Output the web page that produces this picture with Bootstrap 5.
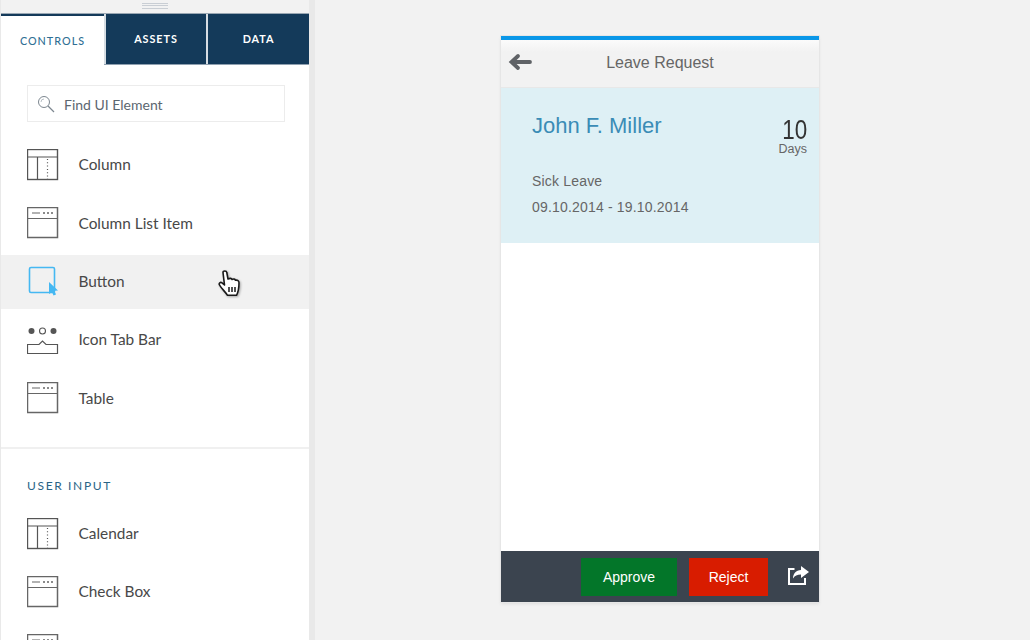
<!DOCTYPE html>
<html lang="en"><head><meta charset="utf-8"><title>Leave Request</title>
<link href="https://cdn.jsdelivr.net/npm/bootstrap@5.3.0/dist/css/bootstrap.min.css" rel="stylesheet">
<style>
html,body{height:640px;overflow:hidden}
body{background:#f2f2f2;font-family:"Lato",sans-serif;color:#4a4a4a}
.stage{height:640px}
.side{width:315px;height:640px;flex:none;border-right:6px solid #e9e9e9;border-left:1px solid #e9e9e9;overflow:hidden}
.handle{height:13px;background:#f2f2f2}
.grip{width:26px;height:6px;border-top:1px solid #c9ced4;border-bottom:1px solid #c9ced4;position:relative;top:3px}
.grip::before{content:"";display:block;height:1px;margin-top:1px;background:#c9ced4}
.tabrow{height:52px;font-size:10.800px;font-weight:700;letter-spacing:.95px;background:#143a5a;border-top:1px solid #9aa7b3;border-bottom:1px solid #8fa0b0}
.tabcell{color:#fff;border-left:2px solid #d6dde3;width:102px;height:50px;padding-top:1px}
.tabcell.on{width:103px;background:#fff;color:#2f6f94;border-left:0;font-weight:500;font-size:10.800px;letter-spacing:1px;margin-bottom:-1px;height:51px;border-top:2px solid #143a5a}
.tabcell.wide{width:103px}
.finder{margin:20px 24px 0 26px;height:37px;border:1px solid #ececec;padding:1px 0 0 9px;font-size:14px;color:#5c6670;gap:9px}
.ctl{height:54px;margin-bottom:4.300px;padding-left:26px;font-size:15.400px;color:#484848;gap:19.500px}
.ctl svg.ic{flex:none;width:32px;height:32px}
.ctl.hov{background:#f1f1f1}
.list1{padding-top:16px}
.rule{height:2px;background:#f0f0f0;margin-top:21.500px}
.grp{font-size:12px;letter-spacing:1.650px;color:#2a6486;padding:29px 0 0 26px;line-height:16px;height:58px}
.hand{position:absolute;left:218px;top:270px;filter:drop-shadow(1px 1px 1px rgba(0,0,0,.3))}
.phonewrap{padding:36px 0 0 186px}
.phone{width:318px;height:566px;background:#fff;box-shadow:0 0 0 1px #e6e6e6,0 2px 3px #dcdcdc;font-family:"Liberation Sans",sans-serif;border-top:4px solid #0a97e8}
.phead{height:48px;background:linear-gradient(#fbfbfb,#f2f2f2 12px);border-bottom:1px solid #e8e8e8;color:#666;font-size:16px;padding-bottom:2px;position:relative}
.pback{position:absolute;left:7px;top:13px}
.pinfo{height:155px;background:#def0f5;padding:0 12px 0 31px;position:relative}
.who{font-size:22px;color:#3a8cb6;line-height:26px;padding-top:25px}
.dayn{position:absolute;right:12px;top:31px;text-align:right;font-size:28px;line-height:22px;color:#333;transform:scaleX(.8);transform-origin:right}
.dayl{position:absolute;right:12px;top:54px;font-size:12.500px;line-height:14px;color:#666}
.pline{font-size:14px;color:#666;line-height:20px;letter-spacing:.18px}
.pbody{height:308px}
.pfoot{height:51px;background:#3b444f;padding:0 9px 0 80px}
.act{height:38px;border:0;border-radius:0;color:#fff;font-size:14px;padding:2px 0 0;font-family:"Liberation Sans",sans-serif}
.act.ok{width:96px;background:#037629;margin-right:12px}
.act.no{width:79px;background:#d81c00;margin-right:20px}
.sharei{margin-bottom:4px}
.first{padding-top:32px}
.second{margin-top:6px}
</style></head>
<body>
<svg width="0" height="0" class="d-block position-absolute"><defs>
<g id="i-col" fill="none" stroke="#555" stroke-width="1.200"><rect x=".5" y=".5" width="30" height="30" stroke-width="1.400"/><path d="M.5 8h30M10.500 8v22.500"/><path d="M20.500 10v20" stroke-dasharray="1 2.300"/></g>
<g id="i-li" fill="none" stroke="#666" stroke-width="1.100"><rect x=".5" y=".5" width="30" height="30" stroke-width="1.500"/><path d="M.5 11.500h30M5 6h8"/><path d="M16 6h11" stroke-dasharray="2 2" stroke-width="1.700"/></g>
</defs></svg>
<div class="stage d-flex">
<aside class="side bg-white">
 <div class="handle d-flex justify-content-center"><div class="grip"></div></div>
 <div class="tabrow d-flex text-uppercase">
  <div class="tabcell on d-flex align-items-center justify-content-center">Controls</div>
  <div class="tabcell d-flex align-items-center justify-content-center">Assets</div>
  <div class="tabcell wide d-flex align-items-center justify-content-center">Data</div>
 </div>
 <div class="finder d-flex align-items-center">
  <svg width="18" height="18" viewBox="0 0 18 18" fill="none" stroke="#7d8790"><circle cx="7" cy="7" r="5.500"/><path d="M4 7a3 3 0 0 1 3-3" stroke="#b8c0c6"/><path d="M11 11l6 6" stroke-width="1.300"/></svg>
  <span>Find UI Element</span>
 </div>
 <div class="list1">
  <div class="ctl d-flex align-items-center"><svg class="ic" viewBox="0 0 32 32"><use href="#i-col"/></svg><span>Column</span></div>
  <div class="ctl d-flex align-items-center"><svg class="ic" viewBox="0 0 32 32"><use href="#i-li"/></svg><span>Column List Item</span></div>
  <div class="ctl hov d-flex align-items-center"><svg class="ic" viewBox="0 0 32 32" fill="none"><rect x="2.500" y="1.500" width="25" height="25" rx="1.500" stroke="#45b8f2" stroke-width="1.600"/><path d="M22 18l9 8.500-3.500.3 1.500 3.700-2.500 1-1.500-3.500L22 30z" fill="#45b8f2" transform="translate(0 -2)"/></svg><span>Button</span></div>
  <div class="ctl d-flex align-items-center"><svg class="ic" viewBox="0 0 32 32" fill="none" stroke="#555"><circle cx="4.500" cy="7" r="3" fill="#555" stroke="none"/><circle cx="15.500" cy="7" r="3" stroke-width="1.100"/><circle cx="26.500" cy="7" r="3" fill="#555" stroke="none"/><path d="M.5 20.500H12l3.500-3.500 3.500 3.500h11.500v9H.5z" stroke-width="1.200"/></svg><span>Icon Tab Bar</span></div>
  <div class="ctl d-flex align-items-center"><svg class="ic" viewBox="0 0 32 32"><use href="#i-li"/></svg><span>Table</span></div>
 </div>
 <div class="rule"></div>
 <div class="grp text-uppercase">User Input</div>
 <div class="ctl d-flex align-items-center"><svg class="ic" viewBox="0 0 32 32"><use href="#i-col"/></svg><span>Calendar</span></div>
 <div class="ctl d-flex align-items-center"><svg class="ic" viewBox="0 0 32 32"><use href="#i-li"/></svg><span>Check Box</span></div>
 <div class="ctl d-flex align-items-center"><svg class="ic" viewBox="0 0 32 32"><use href="#i-li"/></svg></div>
</aside>
<main class="phonewrap">
 <div class="phone d-flex flex-column">
  <div class="phead d-flex align-items-center justify-content-center">
   <svg class="pback" width="24" height="18" viewBox="0 0 24 18" fill="none" stroke="#5f6266" stroke-width="3.800" stroke-linecap="round"><path d="M22 9H4M10 3L3.500 9l6.500 6"/></svg>
   <span>Leave Request</span>
  </div>
  <div class="pinfo">
   <div class="who">John F. Miller</div>
   <div class="dayn">10</div><div class="dayl">Days</div>
   <div class="pline first">Sick Leave</div>
   <div class="pline second">09.10.2014 - 19.10.2014</div>
  </div>
  <div class="pbody"></div>
  <div class="pfoot d-flex align-items-center">
   <button class="btn act ok" type="button">Approve</button>
   <button class="btn act no" type="button">Reject</button>
   <svg class="sharei" width="22" height="20" viewBox="0 0 22 20" fill="none"><path d="M6.500 4H1v15h16v-6" stroke="#fff" stroke-width="2"/><path d="M13 1l8 6-8 6V9.500c-4 0-6 1-8 4 0-5 3-8 8-8.500z" fill="#fff"/></svg>
  </div>
 </div>
</main>
</div>
<svg class="hand" width="24" height="28" viewBox="0 0 24 28"><path d="M5 2.500c0-2 3.500-2 3.800 0l1.200 6.500c2-1 3.500-.8 4 .5 1.500-.8 3-.5 3.500.8 2-.5 3.500.5 3.500 2.500 0 5-.5 9-2.500 12.500H9.500C7.500 22 3 18 1.500 15c-1-2 1-3.200 2.500-2.200L6.500 15z" fill="#fff" stroke="#1a1a1a" stroke-width="1.600" stroke-linejoin="round"/><path d="M11 17v5M14 17v5M17 17v5" stroke="#1a1a1a" stroke-width="1.500"/></svg>
<script src="https://cdn.jsdelivr.net/npm/bootstrap@5.3.0/dist/js/bootstrap.bundle.min.js"></script>
</body></html>
